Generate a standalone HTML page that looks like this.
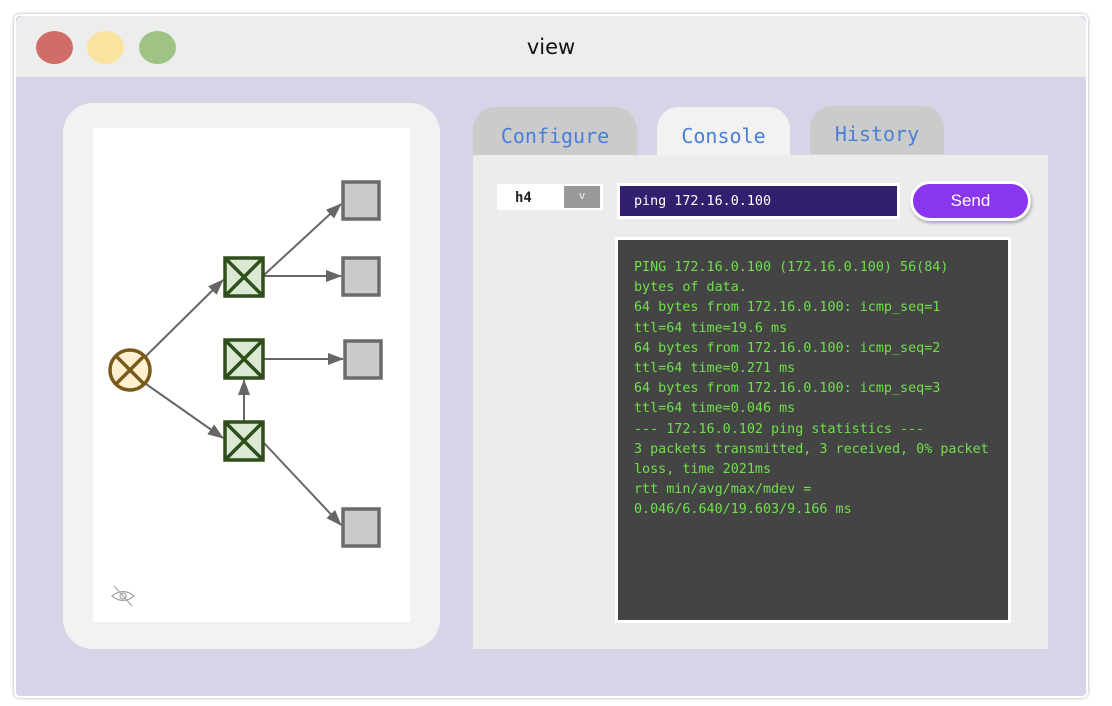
<!DOCTYPE html>
<html><head><meta charset="utf-8"><style>
*{margin:0;padding:0;box-sizing:border-box}
body{width:1112px;height:706px;background:#fff;position:relative;overflow:hidden;font-family:"Liberation Sans",sans-serif}
.win{position:absolute;left:14px;top:14px;width:1074px;height:684px;background:#d8d3e6;border:2px solid #fff;box-shadow:0 0 3px rgba(0,0,0,.35);border-radius:6px}
.bar{position:absolute;left:0;top:0;width:1070px;height:61px;background:#ededed;border-radius:8px 8px 0 0}
.dot{position:absolute;top:15px;width:37px;height:33px;border-radius:50%}
.title{position:absolute;left:0;width:1070px;top:19px;text-align:center;font-size:21px;color:#111;font-family:"DejaVu Sans",sans-serif}
.lp{position:absolute;left:47px;top:87px;width:377px;height:546px;background:#f2f2f2;border-radius:30px}
.lw{position:absolute;left:77px;top:112px;width:317px;height:494px;background:#fff}
.tab{position:absolute;top:91px;height:48px;border-radius:22px 22px 0 0;background:#cbcbcb;font-family:"DejaVu Sans Mono","Liberation Mono",monospace;font-size:20px;color:#4a7fd6;text-align:center;line-height:58px}
.panel{position:absolute;left:457px;top:139px;width:575px;height:494px;background:#ececec}
.mono{font-family:"DejaVu Sans Mono","Liberation Mono",monospace}
.out{position:absolute;left:599px;top:221px;width:396px;height:386px;background:#444;border:3px solid #fff;color:#6fe04a;font-size:13.4px;line-height:20.2px;padding:18px 0 0 16px;white-space:pre}
</style></head><body>
<div class="win">
<div class="bar">
<div class="dot" style="left:20px;background:#d16d69"></div>
<div class="dot" style="left:71px;background:#fae39e"></div>
<div class="dot" style="left:123px;background:#9ec384"></div>
<div class="title">view</div>
</div>
<div class="lp"></div>
<div class="lw"></div>
<svg style="position:absolute;left:-16px;top:-16px" width="1112" height="706">
<defs>
<marker id="b" markerWidth="16" markerHeight="12" refX="15" refY="6" orient="auto" markerUnits="userSpaceOnUse"><path d="M0,0 L16,6 L0,12 z" fill="#666"/></marker></defs>
<g stroke="#666" stroke-width="2" fill="none">
<line x1="146" y1="356" x2="223" y2="280" marker-end="url(#b)"/>
<line x1="146" y1="384" x2="223" y2="438" marker-end="url(#b)"/>
<line x1="264" y1="275" x2="341" y2="204" marker-end="url(#b)"/>
<line x1="264" y1="276" x2="341" y2="276" marker-end="url(#b)"/>
<line x1="264" y1="359" x2="343" y2="359" marker-end="url(#b)"/>
<line x1="244" y1="422" x2="244" y2="380" marker-end="url(#b)"/>
<line x1="264" y1="443" x2="341" y2="525" marker-end="url(#b)"/>
</g>
<g fill="#cbcbcb" stroke="#6b6b6b" stroke-width="3.5">
<rect x="343" y="182" width="36" height="37"/><rect x="343" y="258" width="36" height="37"/>
<rect x="345" y="341" width="36" height="37"/><rect x="343" y="509" width="36" height="37"/>
</g>
<g fill="#dbe8d4" stroke="#2e4f1b" stroke-width="3.5">
<rect x="225" y="258" width="38" height="38"/><path d="M225,258 L263,296 M263,258 L225,296"/>
<rect x="225" y="340" width="38" height="38"/><path d="M225,340 L263,378 M263,340 L225,378"/>
<rect x="225" y="422" width="38" height="38"/><path d="M225,422 L263,460 M263,422 L225,460"/>
</g>
<circle cx="130" cy="370" r="20" fill="#fdf1cf" stroke="#7a5a1b" stroke-width="3.5"/>
<path d="M116,356 L144,384 M144,356 L116,384" stroke="#7a5a1b" stroke-width="3.5"/>
<g stroke="#aaa" stroke-width="1.3" fill="none"><path d="M112,596 Q123,587 134,596 Q123,605 112,596z"/><circle cx="123" cy="596" r="3"/><line x1="114" y1="586" x2="132" y2="606"/></g>
</svg>
<div class="tab" style="left:457px;width:164px">Configure</div>
<div class="tab" style="left:641px;width:133px;background:#f2f2f2;height:50px">Console</div>
<div class="tab" style="left:794px;width:134px;top:90px;line-height:56px">History</div>
<div class="panel"></div>
<div style="position:absolute;left:481px;top:168px;width:106px;height:26px;background:#fff"></div>
<div class="mono" style="position:absolute;left:499px;top:174px;font-size:14px;font-weight:bold;color:#222">h4</div>
<div class="mono" style="position:absolute;left:548px;top:170px;width:36px;height:22px;background:#999;color:#eee;font-size:11px;text-align:center;line-height:20px">v</div>
<div class="mono" style="position:absolute;left:601px;top:167px;width:283px;height:36px;background:#32206e;border:3px solid #fff;color:#fff;font-size:13.4px;line-height:31px;padding-left:14px">ping 172.16.0.100</div>
<div style="position:absolute;left:894px;top:165px;width:121px;height:40px;border-radius:20px;background:#8a35ef;border:3px solid #fff;box-shadow:1px 2px 3px rgba(0,0,0,.3);color:#fff;font-size:17px;text-align:center;line-height:34px">Send</div>
<div class="out mono">PING 172.16.0.100 (172.16.0.100) 56(84)
bytes of data.
64 bytes from 172.16.0.100: icmp_seq=1
ttl=64 time=19.6 ms
64 bytes from 172.16.0.100: icmp_seq=2
ttl=64 time=0.271 ms
64 bytes from 172.16.0.100: icmp_seq=3
ttl=64 time=0.046 ms
--- 172.16.0.102 ping statistics ---
3 packets transmitted, 3 received, 0% packet
loss, time 2021ms
rtt min/avg/max/mdev =
0.046/6.640/19.603/9.166 ms</div>
</div>
</body></html>
